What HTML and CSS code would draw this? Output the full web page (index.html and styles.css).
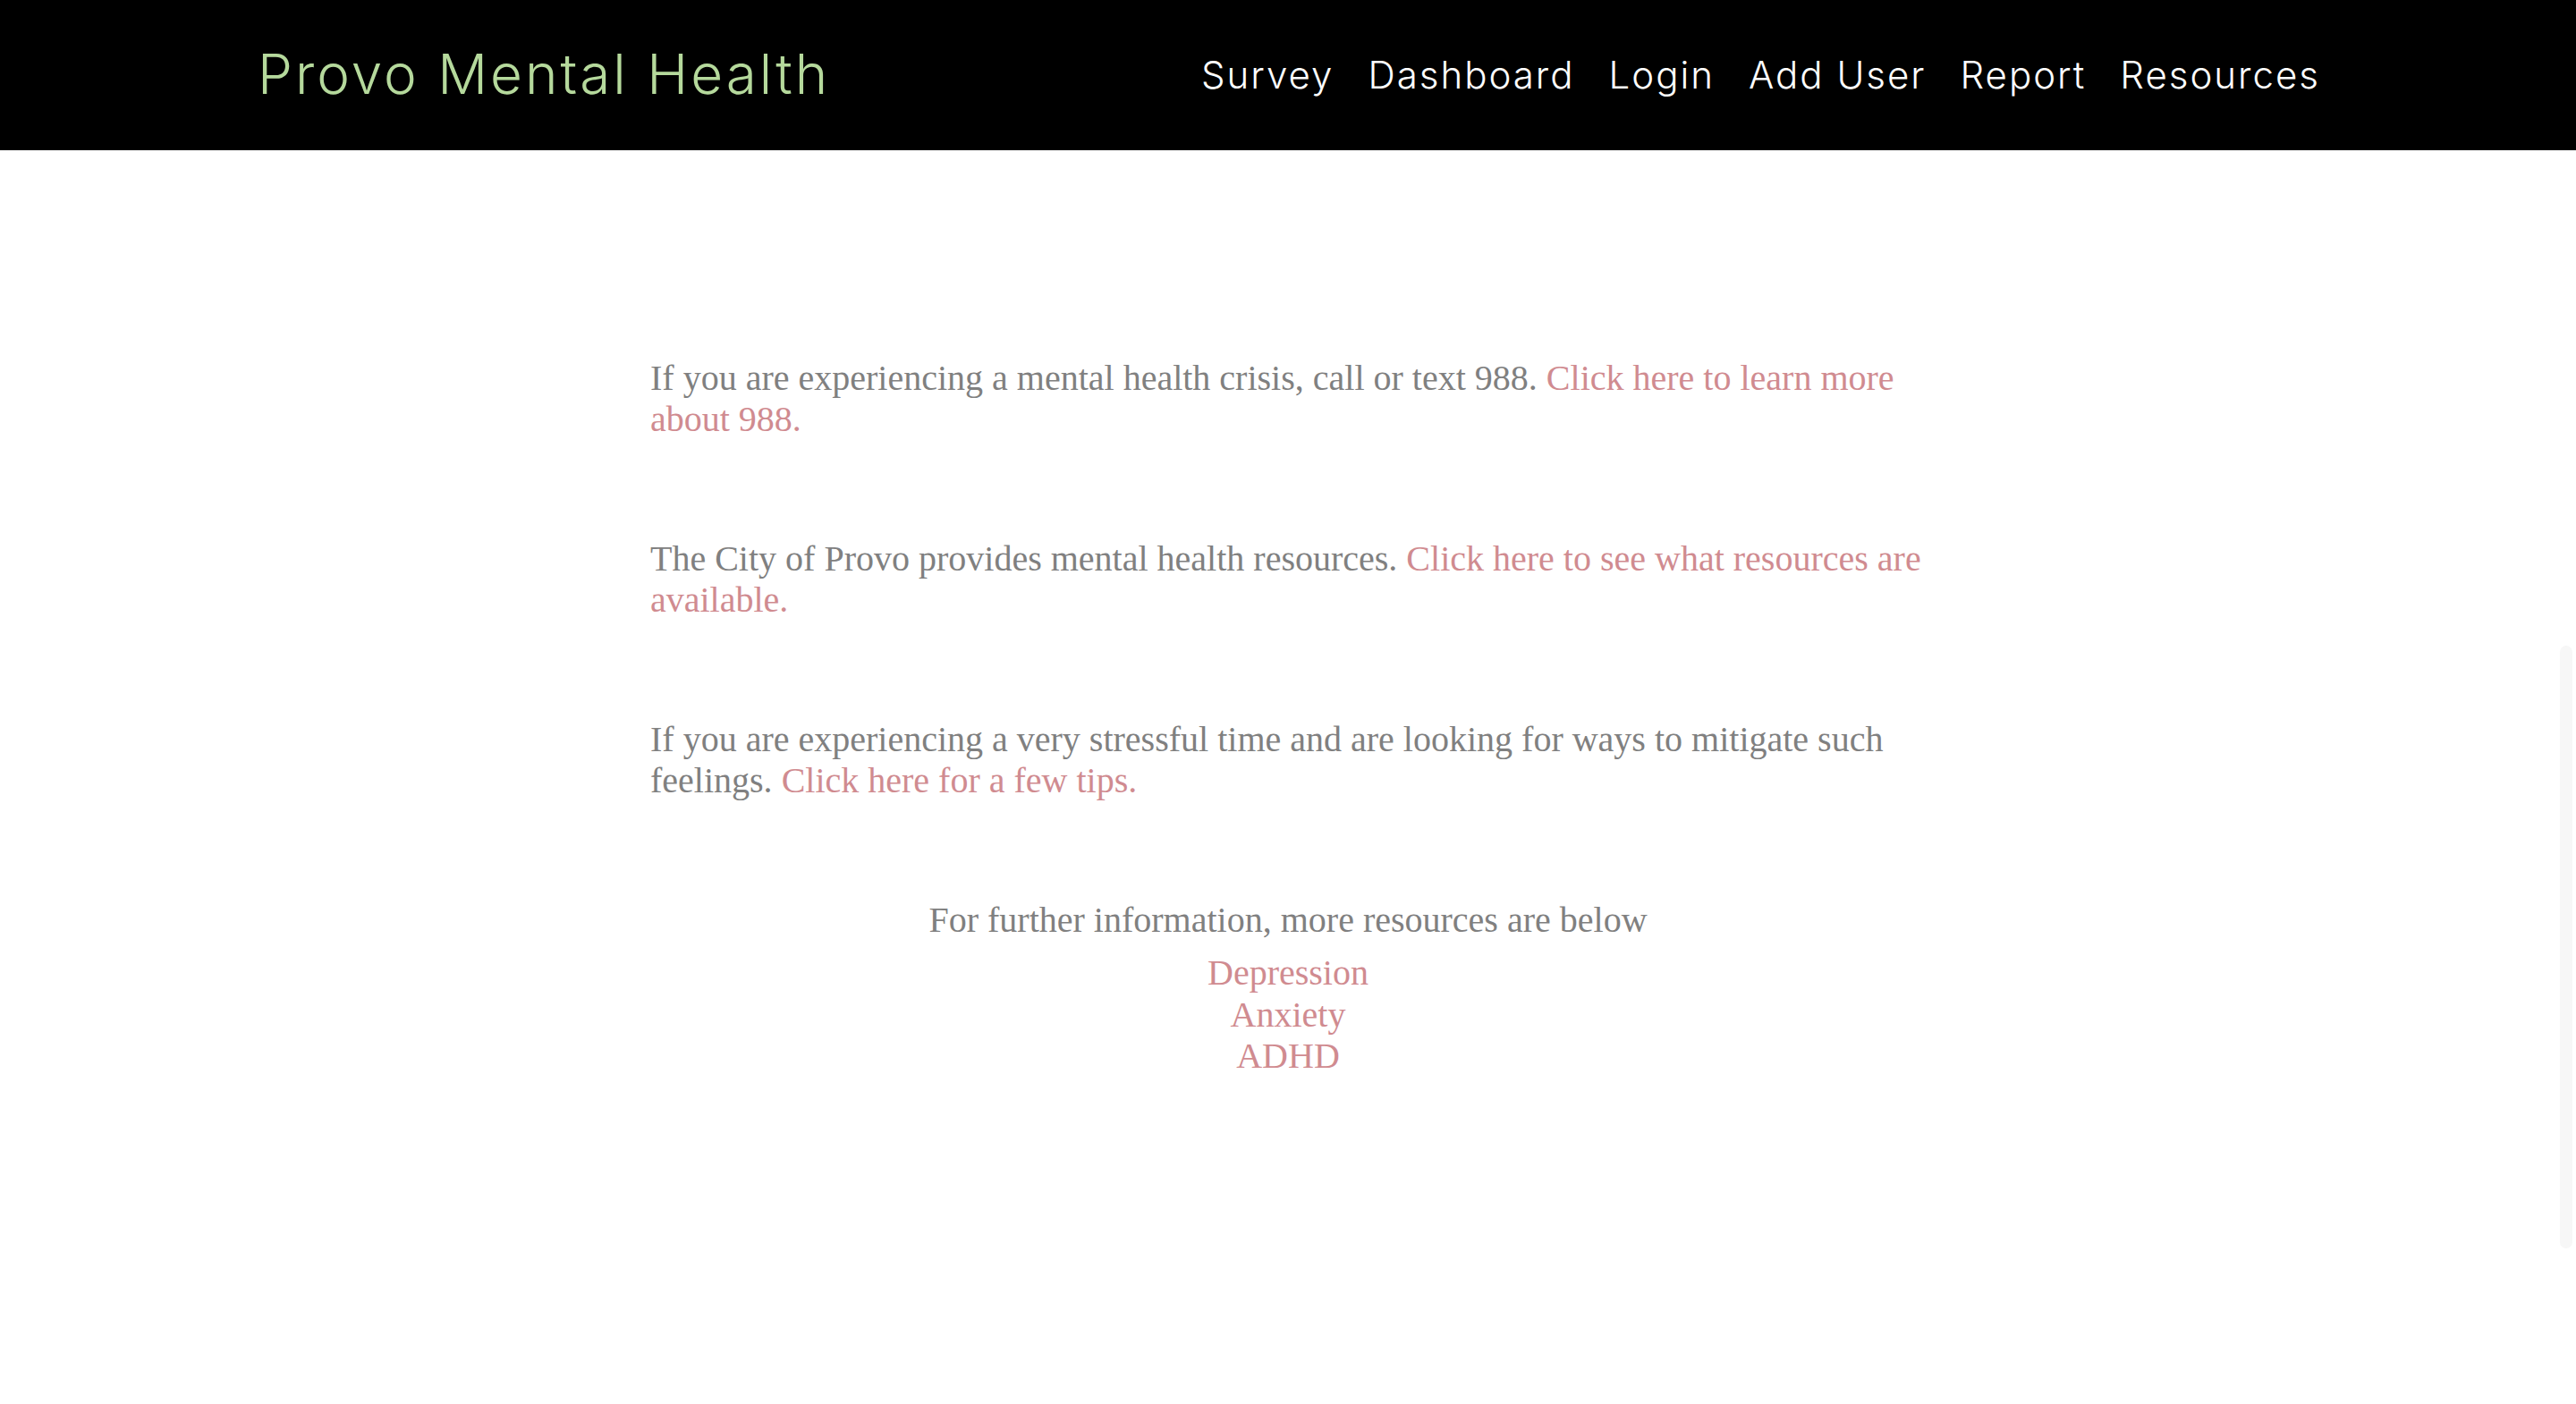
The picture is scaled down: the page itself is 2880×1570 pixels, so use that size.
FILE: index.html
```html
<!DOCTYPE html>
<html lang="en">
<head>
<meta charset="utf-8">
<title>Resources - Provo Mental Health</title>
<link rel="stylesheet" href="styles.css">
</head>
<body>
<header class="site-header">
  <div class="brand">Provo Mental Health</div>
  <nav class="nav">
    <a class="nav-link" href="#">Survey</a>
    <a class="nav-link" href="#">Dashboard</a>
    <a class="nav-link" href="#">Login</a>
    <a class="nav-link" href="#">Add User</a>
    <a class="nav-link" href="#">Report</a>
    <a class="nav-link" href="#">Resources</a>
  </nav>
</header>
<main class="content">
  <p class="para">If you are experiencing a mental health crisis, call or text 988. <a class="link" href="#">Click here to learn more about 988.</a></p>
  <p class="para">The City of Provo provides mental health resources. <a class="link" href="#">Click here to see what resources are available.</a></p>
  <p class="para">If you are experiencing a very stressful time and are looking for ways to mitigate such feelings. <a class="link" href="#">Click here for a few tips.</a></p>
  <p class="para centered">For further information, more resources are below</p>
  <div class="more-links">
    <a class="link block" href="#">Depression</a>
    <a class="link block" href="#">Anxiety</a>
    <a class="link block" href="#">ADHD</a>
  </div>
</main>
<div class="scroll-thumb"></div>
</body>
</html>
```
FILE: styles.css
```css
html, body {
  margin: 0;
  padding: 0;
  background: #ffffff;
}
body {
  font-family: "Liberation Serif", "Times New Roman", serif;
}
.site-header {
  background: #000000;
  height: 168px;
  box-sizing: border-box;
  padding: 0 286px 0 288px;
  display: flex;
  align-items: center;
  justify-content: space-between;
}
.brand {
  font-family: Inter, "Open Sans", sans-serif;
  font-weight: 300;
  font-size: 62px;
  color: #b5d99c;
  letter-spacing: 3px;
  margin-top: -4px;
}
.nav {
  display: flex;
  gap: 38px;
  margin-top: -2px;
}
.nav-link {
  font-family: Inter, "Open Sans", sans-serif;
  font-weight: 300;
  font-size: 42px;
  letter-spacing: 2px;
  color: #ffffff;
  text-decoration: none;
}
.content {
  width: 1426px;
  margin: 0 auto;
  padding-top: 232px;
  padding-bottom: 200px;
}
.para {
  margin: 0 0 110px;
  font-size: 40px;
  line-height: 46px;
  color: #808080;
}
.para.centered {
  text-align: center;
  margin-bottom: 13px;
}
.link {
  color: #d08b90;
  text-decoration: none;
}
.more-links {
  display: flex;
  flex-direction: column;
  align-items: center;
  font-size: 40px;
  line-height: 46.5px;
}
.link.block {
  display: block;
}
.scroll-thumb {
  position: fixed;
  right: 4px;
  top: 722px;
  width: 14px;
  height: 674px;
  border-radius: 7px;
  background: #f7f7f7;
}
```
